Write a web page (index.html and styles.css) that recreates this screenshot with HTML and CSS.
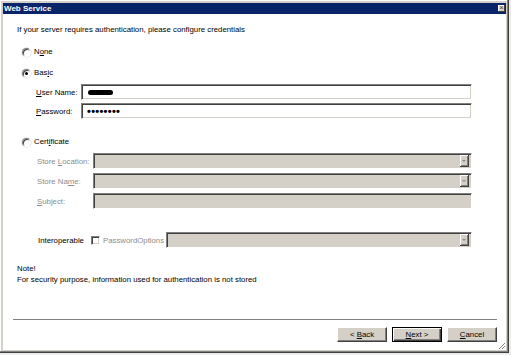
FILE: index.html
```html
<!DOCTYPE html>
<html lang="en">
<head>
  <meta charset="UTF-8" />
  <title>Web Service</title>
  <link rel="stylesheet" href="styles.css">
</head>
<body>

  <div class="window">
    <div class="titlebar">
      <span class="title">Web Service</span>
      <span class="close">&times;</span>
    </div>

    <div class="client">
      <p class="intro">If your server requires authentication, please configure credentials</p>

      <div class="option first">
        <span class="radio"></span>
        <span>N<u>o</u>ne</span>
      </div>

      <div class="option basic">
        <span class="radio checked"></span>
        <span>Bas<u>i</u>c</span>
      </div>

      <div class="fields fields-basic">
        <label><u>U</u>ser Name:</label>
        <div class="field"><span class="redacted"></span></div>
        <label><u>P</u>assword:</label>
        <div class="field"><span class="dots">&bull;&bull;&bull;&bull;&bull;&bull;&bull;&bull;</span></div>
      </div>

      <div class="option cert">
        <span class="radio"></span>
        <span>Cert<u>i</u>ficate</span>
      </div>

      <div class="fields fields-cert">
        <label class="off">Store <u>L</u>ocation:</label>
        <div class="field disabled combo"><span class="drop"></span></div>
        <label class="off">Store Na<u>m</u>e:</label>
        <div class="field disabled combo"><span class="drop"></span></div>
        <label class="off"><u>S</u>ubject:</label>
        <div class="field disabled"></div>
      </div>

      <div class="interop">
        <span class="interop-label">Interoperable</span>
        <span class="checkbox"></span>
        <span class="off pw-label">PasswordOptions</span>
        <div class="field disabled combo grow"><span class="drop"></span></div>
      </div>

      <div class="note">
        <p>Note!</p>
        <p>For security purpose, information used for authentication is not stored</p>
      </div>

      <div class="footer">
        <div class="separator"></div>
        <div class="buttons">
          <button class="btn">&lt; <u>B</u>ack</button>
          <button class="btn default"><u>N</u>ext &gt;</button>
          <button class="btn"><u>C</u>ancel</button>
        </div>
      </div>

      <svg class="grip" width="8" height="8" viewBox="0 0 8 8">
        <path d="M7 1L1 7M7 4L4 7M7 7L7 7" stroke="#808080" stroke-width="1" />
        <path d="M8 2L2 8M8 5L5 8" stroke="#fff" stroke-width="1" />
      </svg>
    </div>
  </div>

</body>
</html>
```

FILE: styles.css
```css
body {
  margin: 0;
  background: #ececec;
  font-family: "Liberation Sans", Arial, sans-serif;
  font-size: 7.8px;
  color: #000;
}

.window {
  width: 509px;
  height: 353px;
  box-sizing: border-box;
  background: #d4d0c8;
  border-right: 1px solid #404040;
  border-bottom: 1px solid #404040;
  box-shadow: inset -1px -1px #808080, inset 1px 1px #fff;
  padding: 3px 2px 2px 3px;
  display: flex;
  flex-direction: column;
}

.titlebar {
  height: 11px;
  background: #0a246a;
  color: #fff;
  display: flex;
  align-items: center;
  justify-content: space-between;
  padding: 0 1px 0 1px;
}

.title {
  font-weight: bold;
  font-size: 8px;
  line-height: 11px;
}

.close {
  width: 7px;
  height: 7px;
  background: #d4d0c8;
  color: #404040;
  font-size: 7px;
  line-height: 6px;
  text-align: center;
  box-shadow: inset -1px -1px #404040, inset 1px 1px #fff;
}

.client {
  flex: 1;
  position: relative;
  background: #fff;
  padding: 10px 9px 8px 14px;
  display: flex;
  flex-direction: column;
}

p {
  margin: 0;
}

.intro {
  line-height: 12px;
}

.option {
  display: flex;
  align-items: center;
  gap: 3px;
  line-height: 12px;
  margin-left: 5px;
}

.option.first {
  margin-top: 10px;
}

.option.basic {
  margin-top: 9px;
}

.option.cert {
  margin-top: 17px;
}

.radio {
  width: 9px;
  height: 9px;
  box-sizing: border-box;
  border-radius: 50%;
  background: #fff;
  border: 1px solid;
  border-color: #808080 #fff #fff #808080;
  box-shadow: inset 1px 1px #404040, 0 0 0 0.5px #d4d0c8;
  display: flex;
  align-items: center;
  justify-content: center;
}

.radio.checked::after {
  content: "";
  width: 3px;
  height: 3px;
  border-radius: 50%;
  background: #000;
}

.fields {
  display: grid;
  align-items: center;
}

.fields-basic {
  grid-template-columns: 45px 1fr;
  row-gap: 3px;
  margin: 5px 25px 0 19px;
}

.fields-cert {
  grid-template-columns: 56px 1fr;
  row-gap: 4px;
  margin: 5px 25px 0 20px;
}

.off {
  color: #8c8c8c;
}

.field {
  height: 16px;
  box-sizing: border-box;
  background: #fff;
  border: 1px solid;
  border-color: #808080 #fff #fff #808080;
  box-shadow: inset 1px 1px #404040, inset -1px -1px #d4d0c8;
  display: flex;
  align-items: center;
  padding: 0 2px 0 5px;
}

.field.disabled {
  background: #d4d0c8;
}

.combo {
  justify-content: flex-end;
}

.drop {
  width: 9px;
  height: 12px;
  box-sizing: border-box;
  background: #d4d0c8;
  box-shadow: inset -1px -1px #404040, inset 1px 1px #fff, inset -2px -2px #808080;
  position: relative;
}

.drop::after {
  content: "";
  position: absolute;
  left: 2px;
  top: 5px;
  border-left: 2.5px solid transparent;
  border-right: 2.5px solid transparent;
  border-top: 2.5px solid #8c8c8c;
}

.redacted {
  display: inline-block;
  width: 25px;
  height: 5px;
  border-radius: 3px;
  background: #000;
  margin-left: 1px;
}

.dots {
  font-size: 11px;
  font-weight: bold;
  letter-spacing: 0.3px;
  line-height: 12px;
}

.interop {
  display: flex;
  align-items: center;
  margin: 23px 25px 0 21px;
}

.interop-label {
  width: 53px;
}

.checkbox {
  width: 9px;
  height: 9px;
  box-sizing: border-box;
  background: #fff;
  border: 1px solid;
  border-color: #808080 #fff #fff #808080;
  box-shadow: inset 1px 1px #404040, inset -1px -1px #d4d0c8;
  margin-right: 3px;
}

.pw-label {
  width: 63px;
}

.grow {
  flex: 1;
}

.note {
  margin-top: 15px;
  line-height: 11px;
}

.footer {
  margin-top: auto;
  margin-left: -4px;
}

.separator {
  height: 2px;
  box-sizing: border-box;
  border-top: 1px solid #808080;
  border-bottom: 1px solid #fff;
}

.buttons {
  display: flex;
  justify-content: flex-end;
  gap: 5px;
  margin-top: 6px;
}

.btn {
  width: 50px;
  height: 15px;
  box-sizing: border-box;
  padding: 0;
  background: #d4d0c8;
  border: 1px solid;
  border-color: #fff #404040 #404040 #fff;
  box-shadow: inset -1px -1px #808080;
  font-family: inherit;
  font-size: 7.8px;
  color: #000;
}

.btn.default {
  border-color: #000;
  box-shadow: inset 1px 1px #fff, inset -1px -1px #404040, inset -2px -2px #808080;
}

.grip {
  position: absolute;
  right: 0;
  bottom: 0;
}
```
